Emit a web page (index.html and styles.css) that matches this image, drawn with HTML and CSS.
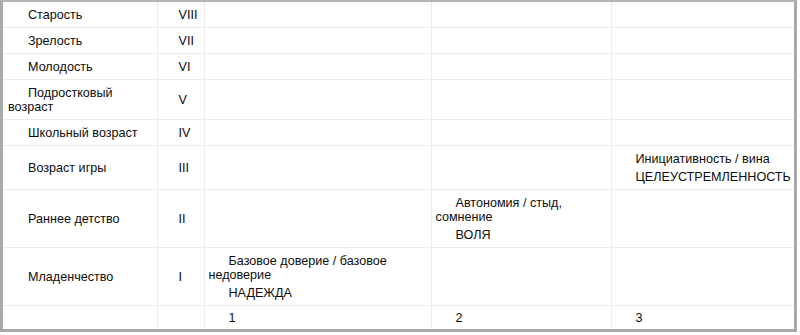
FILE: index.html
```html
<!DOCTYPE html>
<html lang="ru">
<head>
<meta charset="utf-8">
<title>Стадии развития</title>
<link rel="stylesheet" href="styles.css">
</head>
<body>
<div class="frame">
  <table class="stages">
    <colgroup>
      <col class="c-age">
      <col class="c-num">
      <col class="c-a">
      <col class="c-b">
      <col class="c-c">
    </colgroup>
    <tbody>
      <tr><td class="age"><p>Старость</p></td><td class="num"><p>VIII</p></td><td></td><td></td><td></td></tr>
      <tr><td class="age"><p>Зрелость</p></td><td class="num"><p>VII</p></td><td></td><td></td><td></td></tr>
      <tr><td class="age"><p>Молодость</p></td><td class="num"><p>VI</p></td><td></td><td></td><td></td></tr>
      <tr><td class="age"><p>Подростковый возраст</p></td><td class="num"><p>V</p></td><td></td><td></td><td></td></tr>
      <tr><td class="age"><p>Школьный возраст</p></td><td class="num"><p>IV</p></td><td></td><td></td><td></td></tr>
      <tr><td class="age"><p>Возраст игры</p></td><td class="num"><p>III</p></td><td></td><td></td><td class="cell"><p>Инициативность / вина</p><p>ЦЕЛЕУСТРЕМЛЕННОСТЬ</p></td></tr>
      <tr><td class="age"><p>Раннее детство</p></td><td class="num"><p>II</p></td><td></td><td class="cell"><p>Автономия / стыд, сомнение</p><p>ВОЛЯ</p></td><td></td></tr>
      <tr><td class="age"><p>Младенчество</p></td><td class="num"><p>I</p></td><td class="cell"><p>Базовое доверие / базовое недоверие</p><p>НАДЕЖДА</p></td><td></td><td></td></tr>
      <tr class="foot"><td></td><td></td><td class="cell"><p>1</p></td><td class="cell"><p>2</p></td><td class="cell"><p>3</p></td></tr>
    </tbody>
  </table>
</div>
</body>
</html>
```

FILE: styles.css
```css
html, body {
  margin: 0;
  padding: 0;
  background: #ffffff;
}

body {
  font-family: "Liberation Sans", Arial, sans-serif;
  font-size: 12.6px;
  color: #0d0d0d;
}

.frame {
  width: 791px;
  border-top: 2px solid #b4b4b4;
  border-left: 3px solid #a9a9a9;
  border-right: 3px solid #a9a9a9;
  border-bottom: 3px solid #a9a9a9;
}

.stages {
  width: 791px;
  table-layout: fixed;
  border-collapse: collapse;
  border-style: hidden;
}

.c-age { width: 154px; }
.c-num { width: 47px; }
.c-a { width: 227px; }
.c-b { width: 180px; }
.c-c { width: 183px; }

.stages td {
  border: 1px solid #ececec;
  padding: 6px 1px 5px 4px;
  vertical-align: middle;
  line-height: 14px;
}

.stages td p {
  margin: 0;
  text-indent: 20px;
}

.stages td p + p {
  margin-top: 4px;
}

.stages td.age {
  padding-left: 5px;
}

.stages td.num {
  padding-left: 1px;
}

.stages tr.foot td {
  padding-top: 5px;
  padding-bottom: 4px;
}
```
